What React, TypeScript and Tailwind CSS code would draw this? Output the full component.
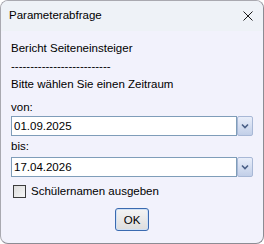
export default function App() {
  return (
    <div className="w-[264px] h-[244px] bg-white">
      <div
        className="w-[264px] h-[244px] rounded-[8px] border border-[#a9a9b0] border-b-[#8c8c94] border-r-[#8c8c94] bg-[#f2f2fc] overflow-hidden flex flex-col text-black"
        style={{ fontFamily: '"Liberation Sans", Arial, sans-serif' }}
      >
        {/* Title bar */}
        <div className="h-[30px] shrink-0 bg-[#eef2f7] flex items-center justify-between pl-[8px] pr-[10px]">
          <span className="text-[11.5px]">Parameterabfrage</span>
          <svg width="10" height="10" viewBox="0 0 10 10" className="mr-[0px]">
            <path d="M0.5 0.5 L9.5 9.5 M9.5 0.5 L0.5 9.5" stroke="#1a1a1a" strokeWidth="1" />
          </svg>
        </div>

        {/* Content */}
        <div className="flex flex-col pl-[10px] pr-[10px] pt-[8px] text-[11.5px] leading-[18px]">
          <div>Bericht Seiteneinsteiger</div>
          <div>--------------------------</div>
          <div>Bitte wählen Sie einen Zeitraum</div>

          <div className="mt-[5px]">von:</div>
          <DateCombo value="01.09.2025" />

          <div className="mt-[1px]">bis:</div>
          <div className="mt-[2px]">
            <DateCombo value="17.04.2026" />
          </div>

          <label className="mt-[8px] ml-[2px] flex items-center gap-[5px] h-[13px]">
            <span className="w-[13px] h-[13px] border border-[#3c3c3c] bg-gradient-to-br from-[#dcdcdc] to-[#f7f7f7]" />
            <span className="leading-[13px]">Schülernamen ausgeben</span>
          </label>

          <div className="mt-[10px] flex justify-center">
            <button className="w-[34px] h-[23px] rounded-[3px] border border-[#3a6ab0] bg-gradient-to-b from-[#f4f4f4] to-[#dddddd] text-[11.5px] flex items-center justify-center shadow-[inset_0_0_0_1px_#cfe0f5]">
              OK
            </button>
          </div>
        </div>
      </div>
    </div>
  );
}

function DateCombo({ value }: { value: string }) {
  return (
    <div className="flex h-[20px]">
      <div className="w-[226px] h-[20px] border border-[#7f9db9] bg-white flex items-center pl-[2px]">
        <span className="text-[11.5px]">{value}</span>
      </div>
      <div className="w-[16px] h-[20px] rounded-[2px] border border-[#a8b8d6] bg-gradient-to-b from-[#e9eefa] to-[#c2cfe8] flex items-center justify-center">
        <svg width="8" height="6" viewBox="0 0 8 6">
          <path d="M1 1.5 L4 4.5 L7 1.5" stroke="#4a5f86" strokeWidth="1.6" fill="none" />
        </svg>
      </div>
    </div>
  );
}
